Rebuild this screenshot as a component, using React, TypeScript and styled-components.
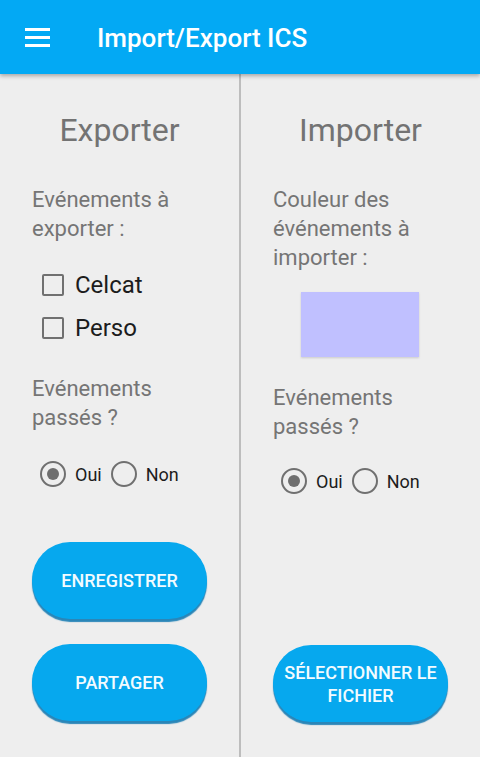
import styled, { createGlobalStyle } from "styled-components";

const GlobalStyle = createGlobalStyle`
  html, body {
    margin: 0;
    padding: 0;
    background: #eeeeee;
    font-family: Roboto, "Noto Sans", sans-serif;
  }
`;

const Screen = styled.div`
  width: 480px;
  height: 757px;
  display: flex;
  flex-direction: column;
  background: #eeeeee;
  overflow: hidden;
`;

const AppBar = styled.header`
  height: 74px;
  flex-shrink: 0;
  display: flex;
  align-items: center;
  background: #03a9f4;
  box-shadow: 0 2px 4px rgba(0, 0, 0, 0.3);
  position: relative;
  z-index: 1;
`;

const MenuButton = styled.div`
  width: 25px;
  margin-left: 25px;
  margin-right: 47px;
  display: flex;
  flex-direction: column;
  gap: 5px;
`;

const MenuLine = styled.span`
  display: block;
  height: 3px;
  background: #ffffff;
`;

const AppTitle = styled.h1`
  margin: 2px 0 0 0;
  color: #ffffff;
  font-size: 26px;
  font-weight: 500;
`;

const Body = styled.main`
  flex: 1;
  display: flex;
`;

const Column = styled.section`
  width: 239px;
  flex-shrink: 0;
  box-sizing: border-box;
  padding: 36px 0 0 32px;
  display: flex;
  flex-direction: column;
`;

const Divider = styled.div`
  width: 2px;
  background: #bdbdbd;
`;

const Heading = styled.h2`
  margin: 0 0 35px -32px;
  font-size: 32px;
  line-height: 40px;
  font-weight: 400;
  color: #737373;
  text-align: center;
`;

const Label = styled.p<{ top?: number }>`
  margin: ${({ top }) => top ?? 0}px 0 0 0;
  font-size: 22px;
  line-height: 29px;
  color: #757575;
`;

const CheckRow = styled.label<{ first?: boolean }>`
  display: flex;
  align-items: center;
  height: 43px;
  margin-top: ${({ first }) => (first ? 20 : 0)}px;
  margin-left: 10px;
  font-size: 24px;
  color: #1c1c1c;
`;

const CheckBox = styled.span`
  width: 22px;
  height: 22px;
  box-sizing: border-box;
  border: 2.5px solid #707070;
  border-radius: 2px;
  margin-right: 11px;
`;

const RadioGroup = styled.div<{ top: number }>`
  display: flex;
  align-items: center;
  height: 30px;
  margin-top: ${({ top }) => top}px;
  margin-left: 8px;
`;

const Radio = styled.span<{ checked?: boolean }>`
  width: 26px;
  height: 26px;
  box-sizing: border-box;
  border: 2.5px solid #707070;
  border-radius: 50%;
  display: flex;
  align-items: center;
  justify-content: center;
  margin-right: 9px;
  &::after {
    content: "";
    width: 12px;
    height: 12px;
    border-radius: 50%;
    background: ${({ checked }) => (checked ? "#6e6e6e" : "transparent")};
  }
`;

const RadioLabel = styled.span`
  font-size: 18px;
  color: #1c1c1c;
  margin-right: 9px;
`;

const PillButton = styled.button<{ top: number }>`
  width: 175px;
  height: 77px;
  margin-top: ${({ top }) => top}px;
  border: none;
  border-radius: 38px;
  background: #06a8ee;
  box-shadow: 0 3px 1px #2a86b8;
  color: #f2fbff;
  font-family: Roboto, "Noto Sans", sans-serif;
  font-size: 18px;
  font-weight: 500;
  line-height: 23px;
  padding: 0 4px;
  text-transform: uppercase;
`;

const ColorSwatch = styled.div`
  width: 118px;
  height: 65px;
  margin: 20px 0 0 28px;
  background: #c0c0ff;
  box-shadow: 0 1px 2px rgba(0, 0, 0, 0.15);
`;

const YesNo = ({ top }: { top: number }) => (
  <RadioGroup top={top}>
    <Radio checked />
    <RadioLabel>Oui</RadioLabel>
    <Radio />
    <RadioLabel>Non</RadioLabel>
  </RadioGroup>
);

export default function App() {
  return (
    <>
      <GlobalStyle />
      <Screen>
        <AppBar>
          <MenuButton>
            <MenuLine />
            <MenuLine />
            <MenuLine />
          </MenuButton>
          <AppTitle>Import/Export ICS</AppTitle>
        </AppBar>
        <Body>
          <Column>
            <Heading>Exporter</Heading>
            <Label>
              Evénements à
              <br />
              exporter :
            </Label>
            <CheckRow first>
              <CheckBox />
              Celcat
            </CheckRow>
            <CheckRow>
              <CheckBox />
              Perso
            </CheckRow>
            <Label top={25}>
              Evénements
              <br />
              passés ?
            </Label>
            <YesNo top={27} />
            <PillButton top={53}>Enregistrer</PillButton>
            <PillButton top={25}>Partager</PillButton>
          </Column>
          <Divider />
          <Column>
            <Heading>Importer</Heading>
            <Label>
              Couleur des
              <br />
              événements à
              <br />
              importer :
            </Label>
            <ColorSwatch />
            <Label top={26}>
              Evénements
              <br />
              passés ?
            </Label>
            <YesNo top={25} />
            <PillButton top={149}>Sélectionner le fichier</PillButton>
          </Column>
        </Body>
      </Screen>
    </>
  );
}
